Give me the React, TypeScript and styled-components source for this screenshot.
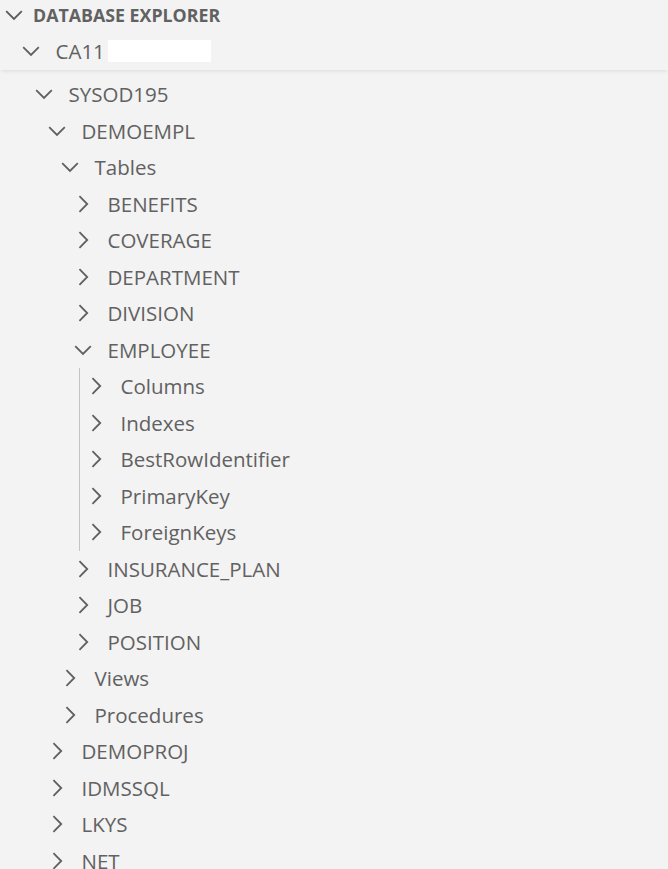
import { createGlobalStyle, styled } from 'styled-components';

type Node = {
  label: string;
  open?: boolean;
  children?: Node[];
  guide?: boolean;
};

const tree: Node[] = [
  {
    label: 'SYSOD195',
    open: true,
    children: [
      {
        label: 'DEMOEMPL',
        open: true,
        children: [
          {
            label: 'Tables',
            open: true,
            children: [
              { label: 'BENEFITS' },
              { label: 'COVERAGE' },
              { label: 'DEPARTMENT' },
              { label: 'DIVISION' },
              {
                label: 'EMPLOYEE',
                open: true,
                guide: true,
                children: [
                  { label: 'Columns' },
                  { label: 'Indexes' },
                  { label: 'BestRowIdentifier' },
                  { label: 'PrimaryKey' },
                  { label: 'ForeignKeys' },
                ],
              },
              { label: 'INSURANCE_PLAN' },
              { label: 'JOB' },
              { label: 'POSITION' },
            ],
          },
          { label: 'Views' },
          { label: 'Procedures' },
        ],
      },
      { label: 'DEMOPROJ' },
      { label: 'IDMSSQL' },
      { label: 'LKYS' },
      { label: 'NET' },
    ],
  },
];

const INDENT = 13;
const BASE = 18;
const GUIDE_X = 79;

function Chevron({ open }: { open?: boolean }) {
  return (
    <Twistie viewBox="0 0 16 16">
      {open ? (
        <polyline points="3.2,5.6 8,10.4 12.8,5.6" />
      ) : (
        <polyline points="5.8,3.2 10.6,8 5.8,12.8" />
      )}
    </Twistie>
  );
}

function Rows({ nodes, level, offset }: { nodes: Node[]; level: number; offset: number }) {
  return (
    <>
      {nodes.map(node => (
        <div key={node.label}>
          <Row $pad={BASE + INDENT * level - offset}>
            <Chevron open={node.open} />
            <Label>{node.label}</Label>
          </Row>
          {node.open && node.children &&
            (node.guide ? (
              <Guide $x={GUIDE_X - offset}>
                <Rows nodes={node.children} level={level + 1} offset={GUIDE_X + 1} />
              </Guide>
            ) : (
              <Rows nodes={node.children} level={level + 1} offset={offset} />
            ))}
        </div>
      ))}
    </>
  );
}

export default function App() {
  return (
    <>
      <GlobalStyle />
      <Panel>
        <Sticky>
          <SectionHeader>
            <Chevron open />
            <HeaderTitle>DATABASE EXPLORER</HeaderTitle>
          </SectionHeader>
          <Row $pad={BASE}>
            <Chevron open />
            <Label>CA11</Label>
            <Redacted />
          </Row>
        </Sticky>
        <Tree>
          <Rows nodes={tree} level={1} offset={0} />
        </Tree>
      </Panel>
    </>
  );
}

const GlobalStyle = createGlobalStyle`
  html, body {
    margin: 0;
    padding: 0;
    background: #f3f3f3;
  }
  body {
    font-family: "Open Sans", "Noto Sans", sans-serif;
  }
`;

const Panel = styled.div`
  width: 668px;
  height: 869px;
  overflow: hidden;
  background: #f3f3f3;
  color: #616161;
`;

const Sticky = styled.div`
  position: relative;
  z-index: 1;
  background: #f3f3f3;
  box-shadow: 0 2px 4px -1px rgba(0, 0, 0, 0.1);
`;

const SectionHeader = styled.div`
  height: 30px;
  padding-bottom: 3px;
  display: flex;
  align-items: center;
  padding-left: 1px;
  color: #616161;

  svg {
    stroke: #5a5a5a;
  }
`;

const HeaderTitle = styled.span`
  margin-left: 6px;
  font-size: 17.8px;
  font-weight: 700;
`;

const Tree = styled.div`
  padding-top: 6.5px;
`;

const Row = styled.div<{ $pad: number }>`
  height: 36.5px;
  display: flex;
  align-items: center;
  padding-left: ${props => `${props.$pad}px`};
  white-space: nowrap;
`;

const Twistie = styled.svg`
  width: 26px;
  height: 26px;
  flex: none;
  fill: none;
  stroke: #5f5f5f;
  stroke-width: 1.1;
`;

const Label = styled.span`
  margin-left: 11.5px;
  font-size: 20.5px;
  color: #616161;
`;

const Redacted = styled.span`
  width: 103px;
  height: 22px;
  margin-left: 3px;
  background: #ffffff;
`;

const Guide = styled.div<{ $x: number }>`
  margin-left: ${props => `${props.$x}px`};
  border-left: 1px solid #c4c4c4;
`;
